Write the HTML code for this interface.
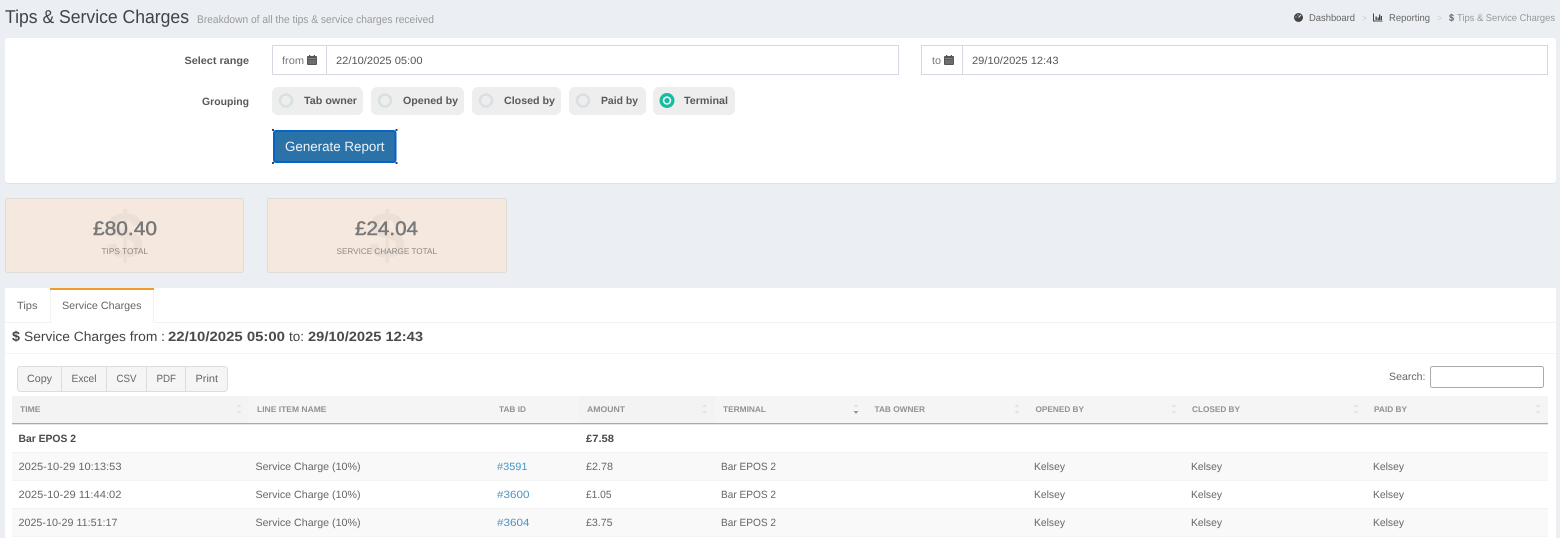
<!DOCTYPE html>
<html lang="en">
<head>
<meta charset="utf-8">
<title>Tips &amp; Service Charges</title>
<style>
html,body{margin:0;padding:0;width:1560px;height:538px;overflow:hidden;background:#ebeef3}
svg{display:block}
text{font-family:"Liberation Sans",sans-serif;font-size:10.5px;fill:#5f5f5f;text-rendering:geometricPrecision}
.b{font-weight:700;fill:#5a5a5a}
.th{font-size:8.2px;font-weight:700;fill:#929292}
.td{font-size:10.5px;fill:#666}
.a{font-size:10.5px;fill:#4a94c4}
.crumb{font-size:9.8px;fill:#666}
.dim{font-size:9.8px;fill:#999}
.tbtn{font-size:10.5px;fill:#666}
.num{font-size:19.5px;fill:#777;stroke:#777;stroke-width:.45px}
</style>
</head>
<body>
<svg width="1560" height="538" viewBox="0 0 1560 538" xmlns="http://www.w3.org/2000/svg">
<defs>
<g id="cal"><rect x="0" y="1" width="10" height="9" rx="1" fill="#555"/><rect x="2" y="0" width="1.3" height="2.5" fill="#555"/><rect x="6.7" y="0" width="1.3" height="2.5" fill="#555"/><path d="M1 3.5h8M1 6h8M1 8h8" stroke="#bbb" stroke-width=".5" fill="none"/></g>
<g id="sort"><path d="M0 3L2.5 0L5 3Z" fill="#e4e4e4"/><path d="M0 7H5L2.5 10Z" fill="#e4e4e4"/></g>
</defs>

<rect width="1560" height="538" fill="#ebeef3"/>

<!-- Page header -->
<text x="5" y="23" style="font-size:18.6px;fill:#3f4448" textLength="184" lengthAdjust="spacingAndGlyphs">Tips &amp; Service Charges</text>
<text x="197" y="23" style="font-size:11px;fill:#9a9a9a" textLength="237" lengthAdjust="spacingAndGlyphs">Breakdown of all the tips &amp; service charges received</text>

<!-- Breadcrumb -->
<circle cx="1298.500" cy="17.500" r="4.500" fill="#444"/>
<path d="M1298.500 17.500L1301 15M1295.500 17h1M1298 14.500v1" stroke="#ebeef3" stroke-width=".9" fill="none"/>
<text class="crumb" x="1309" y="21" textLength="46" lengthAdjust="spacingAndGlyphs">Dashboard</text>
<text x="1362" y="21" style="font-size:9px;fill:#ccc" textLength="5" lengthAdjust="spacingAndGlyphs">&gt;</text>
<path d="M1373.500 13.500v7.500h9" stroke="#444" stroke-width="1" fill="none"/>
<path d="M1375.500 16.500h1.300v3.500h-1.300zM1377.500 17.500h1.300v2.500h-1.300zM1379 14.500h1.300v5.500h-1.300zM1380.800 16h1.200v4h-1.200z" fill="#444"/>
<text class="crumb" x="1389" y="21" textLength="41" lengthAdjust="spacingAndGlyphs">Reporting</text>
<text x="1437" y="21" style="font-size:9px;fill:#ccc" textLength="5" lengthAdjust="spacingAndGlyphs">&gt;</text>
<text x="1449" y="21" style="font-size:10px;font-weight:700;fill:#666" textLength="5" lengthAdjust="spacingAndGlyphs">$</text>
<text class="dim" x="1457" y="21" textLength="98" lengthAdjust="spacingAndGlyphs">Tips &amp; Service Charges</text>

<!-- Filter panel -->
<rect x="5" y="38" width="1551" height="146" rx="3" fill="#dfe2e8"/>
<rect x="5" y="38" width="1551" height="145" rx="3" fill="#fff"/>

<text class="b" x="184.500" y="64" textLength="64.500" lengthAdjust="spacingAndGlyphs">Select range</text>
<rect x="272.500" y="45.500" width="626" height="29" fill="#fff" stroke="#d5d8e3"/>
<path d="M326.500 45.500v29" stroke="#d5d8e3"/>
<text x="282" y="64" style="fill:#777" textLength="22" lengthAdjust="spacingAndGlyphs">from</text>
<use href="#cal" x="307" y="55"/>
<text x="336" y="64" style="fill:#555" textLength="86.500" lengthAdjust="spacingAndGlyphs">22/10/2025 05:00</text>

<rect x="921.500" y="45.500" width="626" height="29" fill="#fff" stroke="#d5d8e3"/>
<path d="M962.500 45.500v29" stroke="#d5d8e3"/>
<text x="932" y="64" style="fill:#777" textLength="9" lengthAdjust="spacingAndGlyphs">to</text>
<use href="#cal" x="944" y="55"/>
<text x="972" y="64" style="fill:#555" textLength="86.500" lengthAdjust="spacingAndGlyphs">29/10/2025 12:43</text>

<text class="b" x="202" y="105" textLength="47" lengthAdjust="spacingAndGlyphs">Grouping</text>

<rect x="272" y="87" width="91" height="28" rx="6" fill="#eee"/>
<circle cx="286" cy="100.500" r="6" fill="none" stroke="#d9e0e3" stroke-width="2.500"/>
<text class="b" x="304" y="104" textLength="53" lengthAdjust="spacingAndGlyphs">Tab owner</text>

<rect x="371" y="87" width="93" height="28" rx="6" fill="#eee"/>
<circle cx="385" cy="100.500" r="6" fill="none" stroke="#d9e0e3" stroke-width="2.500"/>
<text class="b" x="403" y="104" textLength="55" lengthAdjust="spacingAndGlyphs">Opened by</text>

<rect x="472" y="87" width="89" height="28" rx="6" fill="#eee"/>
<circle cx="486" cy="100.500" r="6" fill="none" stroke="#d9e0e3" stroke-width="2.500"/>
<text class="b" x="504" y="104" textLength="51" lengthAdjust="spacingAndGlyphs">Closed by</text>

<rect x="569" y="87" width="77" height="28" rx="6" fill="#eee"/>
<circle cx="583" cy="100.500" r="6" fill="none" stroke="#d9e0e3" stroke-width="2.500"/>
<text class="b" x="601" y="104" textLength="37" lengthAdjust="spacingAndGlyphs">Paid by</text>

<rect x="653" y="87" width="82" height="28" rx="6" fill="#eee"/>
<circle cx="667" cy="100.500" r="7.500" fill="#14bd9b"/>
<circle cx="667" cy="100.500" r="4.300" fill="#eef"/>
<circle cx="667" cy="100.500" r="2.600" fill="#14bd9b"/>
<text class="b" x="684" y="104" textLength="44" lengthAdjust="spacingAndGlyphs">Terminal</text>

<!-- Generate button -->
<rect x="273" y="130" width="123.500" height="33" rx="3" fill="#0663c7"/>
<rect x="275" y="132" width="119.500" height="29" rx="1.500" fill="#2a72a8"/>
<path d="M272 129h2v2h-2zM395.500 129h2v2h-2zM272 162h2v2h-2zM395.500 162h2v2h-2z" fill="#445"/>
<text x="285" y="151" style="font-size:13.400px;fill:#eaf2f8" textLength="99.500" lengthAdjust="spacingAndGlyphs">Generate Report</text>

<!-- Summary cards -->
<rect x="5.500" y="198.500" width="238" height="74" rx="2" fill="#f5e9df" stroke="#e0dcd8"/>
<text x="125" y="258" text-anchor="middle" style="font-size:66px;font-weight:700;fill:#ebdfd6">$</text>
<text class="num" x="93" y="235" textLength="64" lengthAdjust="spacingAndGlyphs">£80.40</text>
<text x="101.500" y="254" style="font-size:8.300px;fill:#8c8885" textLength="46.500" lengthAdjust="spacingAndGlyphs">TIPS TOTAL</text>

<rect x="267.500" y="198.500" width="239" height="74" rx="2" fill="#f5e9df" stroke="#e0dcd8"/>
<text x="387" y="258" text-anchor="middle" style="font-size:66px;font-weight:700;fill:#ebdfd6">$</text>
<text class="num" x="355" y="235" textLength="63" lengthAdjust="spacingAndGlyphs">£24.04</text>
<text x="336.500" y="254" style="font-size:8.300px;fill:#8c8885" textLength="100.500" lengthAdjust="spacingAndGlyphs">SERVICE CHARGE TOTAL</text>

<!-- Tabs panel -->
<rect x="5" y="288" width="1551" height="250" fill="#fff"/>
<path d="M5 322.500H1556" stroke="#f2f2f2"/>
<rect x="50" y="288" width="104" height="35" fill="#fff"/>
<path d="M50.500 288v35M153.500 288v35" stroke="#f2f2f2"/>
<rect x="50" y="288" width="104" height="2" fill="#f39a2e"/>
<text x="17" y="309" style="fill:#666" textLength="20.500" lengthAdjust="spacingAndGlyphs">Tips</text>
<text x="62" y="309" style="fill:#666" textLength="79.500" lengthAdjust="spacingAndGlyphs">Service Charges</text>

<!-- Section heading -->
<text x="12" y="341" style="font-size:14px;font-weight:700;fill:#444" textLength="8" lengthAdjust="spacingAndGlyphs">$</text>
<text x="24" y="341" style="font-size:13.400px;fill:#444" textLength="141" lengthAdjust="spacingAndGlyphs">Service Charges from :</text>
<text x="168" y="341" style="font-size:13.400px;font-weight:700;fill:#4a4a4a" textLength="117" lengthAdjust="spacingAndGlyphs">22/10/2025 05:00</text>
<text x="289" y="341" style="font-size:13.400px;fill:#444" textLength="15" lengthAdjust="spacingAndGlyphs">to:</text>
<text x="308" y="341" style="font-size:13.400px;font-weight:700;fill:#4a4a4a" textLength="115" lengthAdjust="spacingAndGlyphs">29/10/2025 12:43</text>
<path d="M5 353.500H1556" stroke="#f4f4f4"/>

<!-- Export buttons -->
<rect x="17.500" y="366.500" width="210" height="25" rx="3" fill="#f5f5f5" stroke="#ddd"/>
<path d="M61.500 367v24M106.500 367v24M146.500 367v24M185.500 367v24" stroke="#ddd"/>
<text class="tbtn" x="27" y="382" textLength="25" lengthAdjust="spacingAndGlyphs">Copy</text>
<text class="tbtn" x="71.500" y="382" textLength="25" lengthAdjust="spacingAndGlyphs">Excel</text>
<text class="tbtn" x="116.500" y="382" textLength="20" lengthAdjust="spacingAndGlyphs">CSV</text>
<text class="tbtn" x="156.500" y="382" textLength="19.500" lengthAdjust="spacingAndGlyphs">PDF</text>
<text class="tbtn" x="195.500" y="382" textLength="22.500" lengthAdjust="spacingAndGlyphs">Print</text>

<!-- Search -->
<text x="1389" y="380" style="fill:#666" textLength="36.500" lengthAdjust="spacingAndGlyphs">Search:</text>
<rect x="1430.500" y="366.500" width="113" height="21" rx="2" fill="#fff" stroke="#aaa"/>

<!-- Table head -->
<rect x="12" y="396" width="1536" height="27" fill="#f5f5f5"/>
<rect x="12" y="396" width="236" height="27" fill="#f3f3f3"/>
<rect x="579" y="396" width="136" height="27" fill="#f3f3f3"/>
<rect x="12" y="423" width="1536" height="1.300" fill="#aaa"/>
<text class="th" x="20" y="412" textLength="20.500" lengthAdjust="spacingAndGlyphs">TIME</text>
<text class="th" x="257" y="412" textLength="69.500" lengthAdjust="spacingAndGlyphs">LINE ITEM NAME</text>
<text class="th" x="499" y="412" textLength="27" lengthAdjust="spacingAndGlyphs">TAB ID</text>
<text class="th" x="587" y="412" textLength="38" lengthAdjust="spacingAndGlyphs">AMOUNT</text>
<text class="th" x="723" y="412" textLength="43" lengthAdjust="spacingAndGlyphs">TERMINAL</text>
<text class="th" x="874.500" y="412" textLength="50.500" lengthAdjust="spacingAndGlyphs">TAB OWNER</text>
<text class="th" x="1035.500" y="412" textLength="48.500" lengthAdjust="spacingAndGlyphs">OPENED BY</text>
<text class="th" x="1192" y="412" textLength="48" lengthAdjust="spacingAndGlyphs">CLOSED BY</text>
<text class="th" x="1374" y="412" textLength="33" lengthAdjust="spacingAndGlyphs">PAID BY</text>
<use href="#sort" x="236.500" y="404"/>
<use href="#sort" x="702" y="404"/>
<path d="M853.500 407L856 404L858.500 407Z" fill="#e4e4e4"/><path d="M853.500 411H858.500L856 414Z" fill="#999"/>
<use href="#sort" x="1014.500" y="404"/>
<use href="#sort" x="1171.500" y="404"/>
<use href="#sort" x="1353.500" y="404"/>
<use href="#sort" x="1535.500" y="404"/>

<!-- Table body -->
<text x="18.500" y="442" style="font-weight:700;fill:#4a4a4a" textLength="57.500" lengthAdjust="spacingAndGlyphs">Bar EPOS 2</text>
<text x="586" y="442" style="font-weight:700;fill:#4a4a4a" textLength="28" lengthAdjust="spacingAndGlyphs">£7.58</text>

<rect x="12" y="452" width="1536" height="29" fill="#f9f9f9"/>
<path d="M12 452.500H1548M12 480.500H1548" stroke="#f3f3f3"/>
<text class="td" x="18.500" y="470" textLength="103" lengthAdjust="spacingAndGlyphs">2025-10-29 10:13:53</text>
<text class="td" x="255.500" y="470" textLength="105" lengthAdjust="spacingAndGlyphs">Service Charge (10%)</text>
<text class="a" x="497" y="470" textLength="30.500" lengthAdjust="spacingAndGlyphs">#3591</text>
<text class="td" x="586" y="470" textLength="27" lengthAdjust="spacingAndGlyphs">£2.78</text>
<text class="td" x="721" y="470" textLength="55" lengthAdjust="spacingAndGlyphs">Bar EPOS 2</text>
<text class="td" x="1034" y="470" textLength="31" lengthAdjust="spacingAndGlyphs">Kelsey</text>
<text class="td" x="1191" y="470" textLength="31" lengthAdjust="spacingAndGlyphs">Kelsey</text>
<text class="td" x="1373" y="470" textLength="31" lengthAdjust="spacingAndGlyphs">Kelsey</text>

<text class="td" x="18.500" y="498" textLength="103" lengthAdjust="spacingAndGlyphs">2025-10-29 11:44:02</text>
<text class="td" x="255.500" y="498" textLength="105" lengthAdjust="spacingAndGlyphs">Service Charge (10%)</text>
<text class="a" x="497" y="498" textLength="32.500" lengthAdjust="spacingAndGlyphs">#3600</text>
<text class="td" x="586" y="498" textLength="25.500" lengthAdjust="spacingAndGlyphs">£1.05</text>
<text class="td" x="721" y="498" textLength="55" lengthAdjust="spacingAndGlyphs">Bar EPOS 2</text>
<text class="td" x="1034" y="498" textLength="31" lengthAdjust="spacingAndGlyphs">Kelsey</text>
<text class="td" x="1191" y="498" textLength="31" lengthAdjust="spacingAndGlyphs">Kelsey</text>
<text class="td" x="1373" y="498" textLength="31" lengthAdjust="spacingAndGlyphs">Kelsey</text>

<rect x="12" y="508" width="1536" height="29" fill="#f9f9f9"/>
<path d="M12 508.500H1548M12 536.500H1548" stroke="#f3f3f3"/>
<text class="td" x="18.500" y="526" textLength="99" lengthAdjust="spacingAndGlyphs">2025-10-29 11:51:17</text>
<text class="td" x="255.500" y="526" textLength="105" lengthAdjust="spacingAndGlyphs">Service Charge (10%)</text>
<text class="a" x="497" y="526" textLength="32.500" lengthAdjust="spacingAndGlyphs">#3604</text>
<text class="td" x="586" y="526" textLength="26.500" lengthAdjust="spacingAndGlyphs">£3.75</text>
<text class="td" x="721" y="526" textLength="55" lengthAdjust="spacingAndGlyphs">Bar EPOS 2</text>
<text class="td" x="1034" y="526" textLength="31" lengthAdjust="spacingAndGlyphs">Kelsey</text>
<text class="td" x="1191" y="526" textLength="31" lengthAdjust="spacingAndGlyphs">Kelsey</text>
<text class="td" x="1373" y="526" textLength="31" lengthAdjust="spacingAndGlyphs">Kelsey</text>
</svg>
</body>
</html>
